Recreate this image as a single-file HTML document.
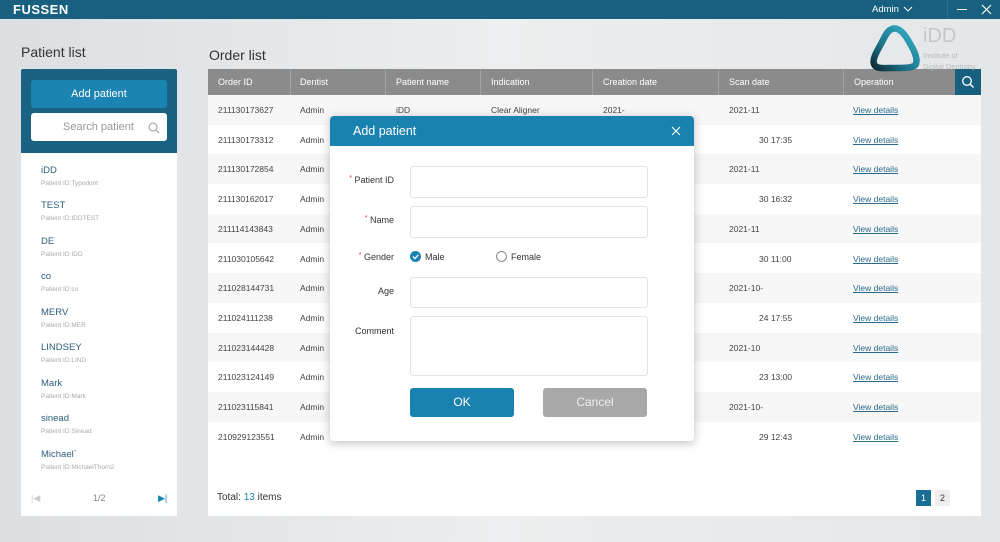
<!DOCTYPE html>
<html><head><meta charset="utf-8"><style>
*{margin:0;padding:0;box-sizing:border-box}
body{width:1000px;height:542px;overflow:hidden;position:relative;font-family:"Liberation Sans",sans-serif;background:linear-gradient(90deg,#dcdfe2 0%,#eceeef 50%,#e4e6e8 100%);color:#333}
.a{position:absolute}
.top{left:0;top:0;width:1000px;height:19px;background:#17607f}
.t{position:absolute;white-space:nowrap}
.row{position:absolute;left:208px;width:773px;height:29.7px;font-size:8.5px;color:#444}
.row span{position:absolute;top:10px}
.row .v{color:#2a6a8a;text-decoration:underline}
.pn{position:absolute;left:41px;font-size:9.5px;color:#2d5e7d}
.pi{position:absolute;left:41px;font-size:6.5px;color:#aaa}
.inp{position:absolute;left:410px;width:238px;background:#fff;border:1px solid #e3e3e3;border-radius:3px}
.lbl{position:absolute;font-size:9px;color:#333;text-align:right;width:64px;left:330px}
.lbl b{color:#d33;font-weight:normal;font-size:7px;vertical-align:top}
</style></head><body>
<div class="a top"></div>
<div class="t" style="left:13px;top:2px;color:#fff;font-weight:bold;font-size:13px;letter-spacing:.5px">FUSSEN</div>
<div class="t" style="left:872px;top:4px;color:#fff;font-size:9.5px">Admin</div>
<svg class="a" style="left:903px;top:6px" width="10" height="7"><path d="M1 1L5 5L9 1" stroke="#fff" fill="none" stroke-width="1"/></svg>
<div class="a" style="left:947px;top:0;width:1px;height:19px;background:#2a7090"></div>
<div class="a" style="left:957px;top:9px;width:10px;height:1px;background:#fff"></div>
<svg class="a" style="left:981px;top:4px" width="11" height="11"><path d="M1 1L10 10M10 1L1 10" stroke="#fff" stroke-width="1.2"/></svg>

<div class="t" style="left:21px;top:44px;font-size:14px;color:#333">Patient list</div>
<div class="t" style="left:209px;top:47px;font-size:14px;color:#333">Order list</div>

<!-- patient panel -->
<div class="a" style="left:21px;top:69px;width:156px;height:84px;background:#1a6282;border-radius:2px 2px 0 0"></div>
<div class="a" style="left:31px;top:80px;width:136px;height:28px;background:#1b84b3;border-radius:3px;color:#fff;font-size:11px;text-align:center;line-height:28px">Add patient</div>
<div class="a" style="left:31px;top:113px;width:136px;height:28px;background:#fff;border-radius:3px;color:#999;font-size:11px;line-height:28px;padding-left:32px">Search patient</div>
<svg class="a" style="left:148px;top:122px" width="12" height="12"><circle cx="5" cy="5" r="4" stroke="#999" fill="none"/><path d="M8 8L11 11" stroke="#999"/></svg>
<div class="a" style="left:21px;top:153px;width:156px;height:363px;background:#fff"></div>
<div class="pn" style="top:165px">iDD</div><div class="pi" style="top:180px">Patient ID:Typodont</div>
<div class="pn" style="top:200px">TEST</div><div class="pi" style="top:215px">Patient ID:IDDTEST</div>
<div class="pn" style="top:236px">DE</div><div class="pi" style="top:251px">Patient ID:IDD</div>
<div class="pn" style="top:271px">co</div><div class="pi" style="top:286px">Patient ID:co</div>
<div class="pn" style="top:307px">MERV</div><div class="pi" style="top:322px">Patient ID:MER</div>
<div class="pn" style="top:342px">LINDSEY</div><div class="pi" style="top:357px">Patient ID:LIND</div>
<div class="pn" style="top:378px">Mark</div><div class="pi" style="top:393px">Patient ID:Mark</div>
<div class="pn" style="top:413px">sinead</div><div class="pi" style="top:428px">Patient ID:Sinead</div>
<div class="pn" style="top:449px">Michael`</div><div class="pi" style="top:464px">Patient ID:MichaelThorn2</div>
<div class="t" style="left:31px;top:493px;font-size:9px;color:#ccc">|◀</div>
<div class="t" style="left:93px;top:493px;font-size:9px;color:#888">1/2</div>
<div class="t" style="left:158px;top:493px;font-size:9px;color:#1b84b3">▶|</div>

<!-- table -->
<div class="a" style="left:208px;top:69px;width:773px;height:447px;background:#fff"></div>
<div class="a" style="left:208px;top:69px;width:747px;height:26px;background:#8b8b8b;color:#fff;font-size:9px;line-height:26px">
<span class="t" style="left:10px">Order ID</span><span class="t" style="left:92px">Dentist</span><span class="t" style="left:188px">Patient name</span><span class="t" style="left:283px">Indication</span><span class="t" style="left:395px">Creation date</span><span class="t" style="left:521px">Scan date</span><span class="t" style="left:646px">Operation</span>
<span class="a" style="left:82px;top:0;width:1px;height:26px;background:#a3a3a3"></span><span class="a" style="left:177px;top:0;width:1px;height:26px;background:#a3a3a3"></span><span class="a" style="left:272px;top:0;width:1px;height:26px;background:#a3a3a3"></span><span class="a" style="left:384px;top:0;width:1px;height:26px;background:#a3a3a3"></span><span class="a" style="left:510px;top:0;width:1px;height:26px;background:#a3a3a3"></span><span class="a" style="left:635px;top:0;width:1px;height:26px;background:#a3a3a3"></span>
</div>
<div class="a" style="left:955px;top:69px;width:26px;height:26px;background:#17607f"></div>
<svg class="a" style="left:961px;top:75px" width="14" height="14"><circle cx="6" cy="6" r="4.3" stroke="#fff" fill="none" stroke-width="1.3"/><path d="M9 9L12.5 12.5" stroke="#fff" stroke-width="1.4"/></svg>

<!-- logo (on top of table) -->
<svg class="a" style="left:866px;top:22px;z-index:2" width="58" height="56">
<defs><linearGradient id="g" x1="0" y1="1" x2="1" y2="0"><stop offset="0" stop-color="#0f2a36"/><stop offset=".35" stop-color="#1a6f86"/><stop offset="1" stop-color="#38b6cf"/></linearGradient></defs>
<path d="M24 8C30 4 36 8 42 18C48 28 52 36 50 42C48 46 40 46 28 46C16 46 10 47 8 42C6 36 12 28 16 20C19 14 21 10 24 8Z" fill="none" stroke="url(#g)" stroke-width="6.5" stroke-linejoin="round"/></svg>
<div class="t" style="left:923px;top:25px;font-size:20px;color:#c4c7ca;font-weight:300;z-index:2">iDD</div>
<div class="t" style="left:923px;top:50px;font-size:7.5px;color:#b8bbbe;line-height:11px;z-index:2">Institute of<br>Digital Dentistry</div>

<div class="row" style="top:95px;background:#f7f7f7"><span style="left:10px">211130173627</span><span style="left:92px">Admin</span><span style="left:188px">iDD</span><span style="left:283px">Clear Aligner</span><span style="left:395px">2021-</span><span style="left:521px">2021-11</span><span class="v" style="left:645px">View details</span></div>
<div class="row" style="top:124.7px"><span style="left:10px">211130173312</span><span style="left:92px">Admin</span><span style="left:551px">30 17:35</span><span class="v" style="left:645px">View details</span></div>
<div class="row" style="top:154.4px;background:#f7f7f7"><span style="left:10px">211130172854</span><span style="left:92px">Admin</span><span style="left:521px">2021-11</span><span class="v" style="left:645px">View details</span></div>
<div class="row" style="top:184.1px"><span style="left:10px">211130162017</span><span style="left:92px">Admin</span><span style="left:551px">30 16:32</span><span class="v" style="left:645px">View details</span></div>
<div class="row" style="top:213.8px;background:#f7f7f7"><span style="left:10px">211114143843</span><span style="left:92px">Admin</span><span style="left:521px">2021-11</span><span class="v" style="left:645px">View details</span></div>
<div class="row" style="top:243.5px"><span style="left:10px">211030105642</span><span style="left:92px">Admin</span><span style="left:551px">30 11:00</span><span class="v" style="left:645px">View details</span></div>
<div class="row" style="top:273.2px;background:#f7f7f7"><span style="left:10px">211028144731</span><span style="left:92px">Admin</span><span style="left:521px">2021-10-</span><span class="v" style="left:645px">View details</span></div>
<div class="row" style="top:302.9px"><span style="left:10px">211024111238</span><span style="left:92px">Admin</span><span style="left:551px">24 17:55</span><span class="v" style="left:645px">View details</span></div>
<div class="row" style="top:332.6px;background:#f7f7f7"><span style="left:10px">211023144428</span><span style="left:92px">Admin</span><span style="left:521px">2021-10</span><span class="v" style="left:645px">View details</span></div>
<div class="row" style="top:362.3px"><span style="left:10px">211023124149</span><span style="left:92px">Admin</span><span style="left:551px">23 13:00</span><span class="v" style="left:645px">View details</span></div>
<div class="row" style="top:392px;background:#f7f7f7"><span style="left:10px">211023115841</span><span style="left:92px">Admin</span><span style="left:521px">2021-10-</span><span class="v" style="left:645px">View details</span></div>
<div class="row" style="top:421.7px"><span style="left:10px">210929123551</span><span style="left:92px">Admin</span><span style="left:551px">29 12:43</span><span class="v" style="left:645px">View details</span></div>

<div class="t" style="left:217px;top:492px;font-size:10px;color:#333">Total: <span style="color:#1b84b3">13</span> items</div>
<div class="a" style="left:916px;top:490px;width:15px;height:16px;background:#1a6e96;color:#fff;font-size:9px;text-align:center;line-height:16px">1</div>
<div class="a" style="left:935px;top:490px;width:15px;height:16px;background:#eee;color:#333;font-size:9px;text-align:center;line-height:16px">2</div>

<!-- modal -->
<div class="a" style="left:330px;top:116px;width:364px;height:325px;background:#fff;border-radius:4px;box-shadow:0 2px 10px rgba(0,0,0,.25)"></div>
<div class="a" style="left:330px;top:116px;width:364px;height:30px;background:#1a82b0;border-radius:4px 4px 0 0"></div>
<div class="t" style="left:353px;top:124px;color:#fff;font-size:12.5px">Add patient</div>
<svg class="a" style="left:671px;top:126px" width="10" height="10"><path d="M1 1L9 9M9 1L1 9" stroke="#fff" stroke-width="1.1"/></svg>

<div class="lbl" style="top:175px"><b>*</b> Patient ID</div>
<div class="inp" style="top:166px;height:32px"></div>
<div class="lbl" style="top:215px"><b>*</b> Name</div>
<div class="inp" style="top:206px;height:32px"></div>
<div class="lbl" style="top:252px"><b>*</b> Gender</div>
<div class="a" style="left:410px;top:251px;width:11px;height:11px;border-radius:50%;background:#1a82b0"></div>
<svg class="a" style="left:410px;top:251px" width="11" height="11"><path d="M3 5.5L5 7.5L8.3 3.8" stroke="#fff" fill="none" stroke-width="1.3"/></svg>
<div class="t" style="left:425px;top:252px;font-size:9px">Male</div>
<div class="a" style="left:496px;top:251px;width:11px;height:11px;border-radius:50%;border:1px solid #888"></div>
<div class="t" style="left:511px;top:252px;font-size:9px">Female</div>
<div class="lbl" style="top:286px">Age</div>
<div class="inp" style="top:277px;height:31px"></div>
<div class="lbl" style="top:326px">Comment</div>
<div class="inp" style="top:316px;height:60px"></div>
<div class="a" style="left:410px;top:388px;width:104px;height:29px;background:#1a82b0;border-radius:3px;color:#fff;font-size:12px;text-align:center;line-height:29px">OK</div>
<div class="a" style="left:543px;top:388px;width:104px;height:29px;background:#a8a8a8;border-radius:3px;color:#eee;font-size:12px;text-align:center;line-height:29px">Cancel</div>
</body></html>
